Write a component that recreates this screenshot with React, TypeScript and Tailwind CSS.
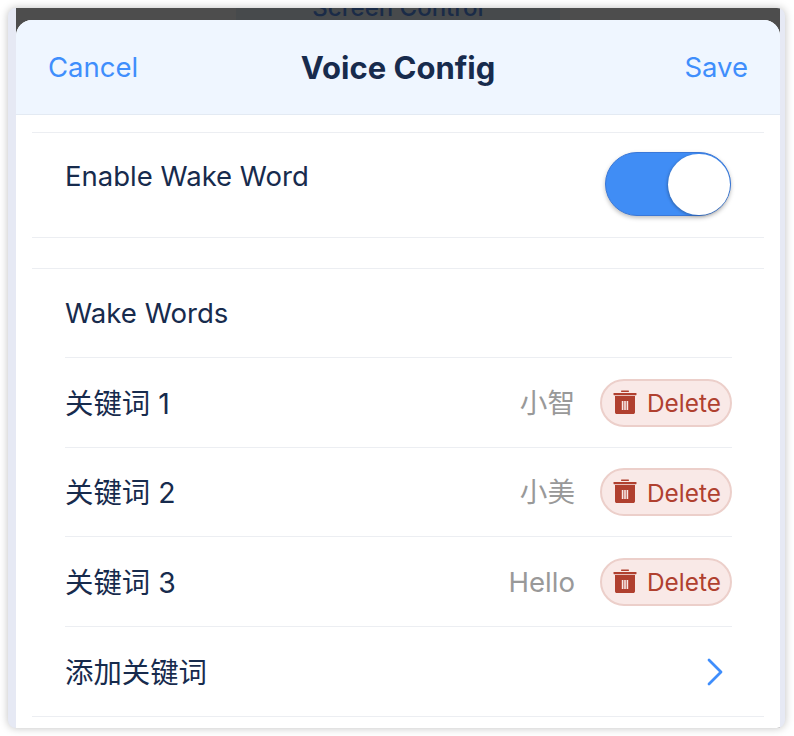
import { ChevronRight } from "lucide-react";

const sans = { fontFamily: '"Inter", "Noto Sans CJK SC", sans-serif' };

function TrashIcon() {
  return (
    <svg viewBox="0 0 24 24" className="mb-[2px] h-[24px] w-[24px]" fill="#b0402f">
      <rect x="8" y="0.4" width="8" height="1.5" rx="0.6" />
      <rect x="0.5" y="3" width="23" height="2.2" rx="0.6" />
      <path
        fillRule="evenodd"
        d="M2 6h20v16.200c0 1-.8 1.800-1.800 1.800H3.800c-1 0-1.800-.8-1.800-1.800V6zm6.800 5v9h1.600v-9H8.800zm2.400 0v9h1.600v-9h-1.600zm2.400 0v9h1.600v-9h-1.600z"
      />
    </svg>
  );
}

function KeywordRow({ label, value, h }: { label: string; value: string; h: string }) {
  return (
    <div className={`flex items-center border-t border-[#eceef2] ${h}`}>
      <span className="mt-[3px] text-[28.4px] text-[#172b4d]">{label}</span>
      <span className="ml-auto mr-[25px] mt-[2px] text-[27.6px] text-[#999999]">{value}</span>
      <button className="flex h-[48px] w-[132px] items-center gap-[10px] rounded-full border-2 border-[#eccfca] bg-[#f9e9e7] pl-[11px] text-[24.400px] text-[#b0402f]">
        <TrashIcon />
        <span className="mt-[2px]">Delete</span>
      </button>
    </div>
  );
}

export default function App() {
  return (
    <div className="min-h-[736px] bg-white p-2 pr-[9px]" style={sans}>
      <div className="flex h-[720px] flex-col overflow-hidden rounded-lg bg-[#e6e9f4] pl-2 pr-[5px] shadow-[0_0_8px_rgba(0,0,0,0.25)]">
        {/* Backdrop behind the sheet */}
        <div className="flex h-[12px] shrink-0 items-end justify-center overflow-hidden bg-[#4d4d4d]">
          <div className="flex h-[12px] w-[324px] justify-center bg-[#474a4c] leading-[12px]">
            <span className="mb-[-2px] self-end text-[24px] font-medium leading-[28px] text-[#1a2b47]">
              Screen Control
            </span>
          </div>
        </div>

        {/* Sheet */}
        <div className="flex-1 overflow-hidden bg-[#4d4d4d]">
          <div className="h-full overflow-hidden rounded-t-[16px] bg-white">
            {/* Header */}
            <div className="flex h-[95px] items-center border-b border-[#e3eaf3] bg-[#eff6ff] px-[32px] pt-[2px]">
              <div className="flex flex-1 justify-start">
                <button className="text-[27.500px] text-[#3f8efc]">Cancel</button>
              </div>
              <h1 className="text-[31px] font-bold text-[#172b4d]">Voice Config</h1>
              <div className="flex flex-1 justify-end">
                <button className="text-[27.500px] text-[#3f8efc]">Save</button>
              </div>
            </div>

            <div className="px-[16px] pt-[17px]">
              {/* Wake word switch */}
              <div className="flex h-[106px] justify-between border-y border-[#eceef2] pl-[33px] pr-[33px] pt-[19px]">
                <span className="text-[27.500px] leading-[48px] text-[#172b4d]">Enable Wake Word</span>
                <div className="flex h-[64px] w-[126px] items-center justify-end rounded-full border border-[#3a78d8] bg-[#408df5] shadow-[0_2px_4px_rgba(0,0,0,0.25)]">
                  <div className="h-[61px] w-[62px] rounded-full bg-white shadow-[-1px_1px_3px_rgba(0,0,0,0.25)]" />
                </div>
              </div>

              {/* Wake words */}
              <div className="mt-[30px] border-y border-[#eceef2] pl-[33px] pr-[32px]">
                <div className="flex h-[88px] items-center pt-[2px] text-[27.600px] text-[#172b4d]">Wake Words</div>
                <KeywordRow label="关键词 1" value="小智" h="h-[90px]" />
                <KeywordRow label="关键词 2" value="小美" h="h-[89px]" />
                <KeywordRow label="关键词 3" value="Hello" h="h-[90px]" />
                <div className="flex h-[90px] items-center justify-between border-t border-[#eceef2] text-[28.400px] text-[#172b4d]">
                  <span className="mt-[3px]">添加关键词</span>
                  <ChevronRight className="mr-[-7px] h-[48px] w-[48px] text-[#3f8efc]" strokeWidth={1.4} />
                </div>
              </div>
            </div>
          </div>
        </div>
      </div>
    </div>
  );
}
